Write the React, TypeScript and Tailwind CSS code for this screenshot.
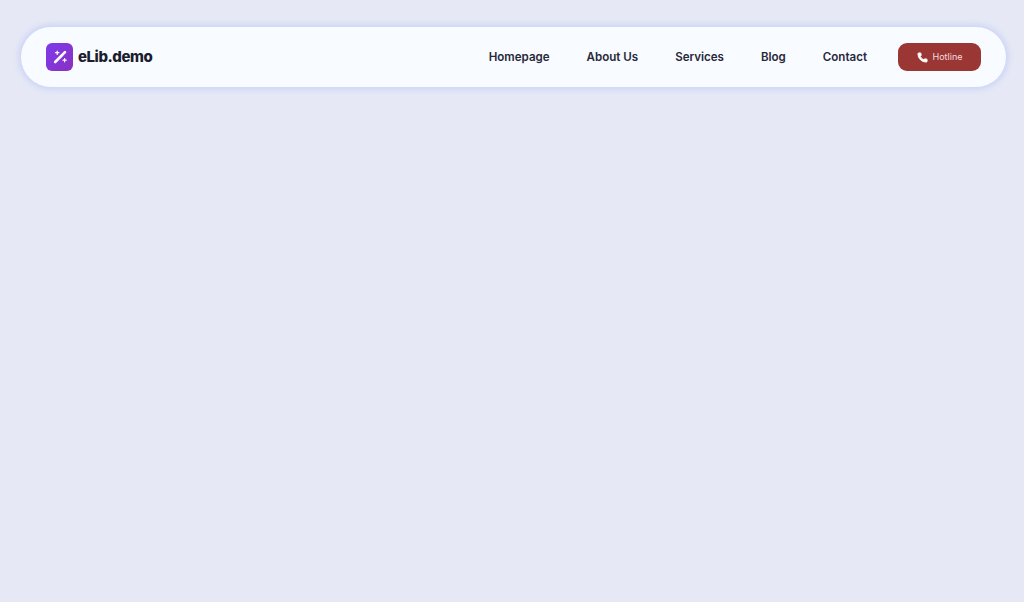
import { Phone } from "lucide-react";

const links = ["Homepage", "About Us", "Services", "Blog", "Contact"];

export default function App() {
  return (
    <div className="min-h-[602px] bg-[#e6e9f5] pl-[21px] pr-[18px] pt-[27px] font-['Inter',sans-serif]">
      <header className="flex h-[60px] items-center justify-between rounded-[30px] bg-[#f8fbff] px-[25px] shadow-[0_0_7px_2px_#c9d0f6]">
        <div className="flex items-center gap-[5px]">
          <div className="flex h-7 w-[27px] items-center justify-center rounded-[6px] bg-gradient-to-br from-[#7c3aed] to-[#8b2fc0]">
            <svg width="16" height="16" viewBox="0 0 16 16" fill="none" stroke="#ffffff" strokeLinecap="round">
              <path d="M3.2 13 L10.2 6" strokeWidth="2.6" />
              <path d="M11 5.2 L13 3.2" strokeWidth="2.6" />
              <path d="M5.2 2v3.4M3.5 3.7h3.4" strokeWidth="1.2" />
              <path d="M12.6 9.6v3.2M11 11.2h3.2" strokeWidth="1.2" />
            </svg>
          </div>
          <span className="pt-[1px] text-[15px] font-extrabold tracking-[-0.45px] text-[#1c1d2e]">eLib.demo</span>
        </div>
        <nav className="flex items-center">
          <div className="flex items-center gap-[37px] pt-[2px]">
            {links.map((l) => (
              <a key={l} className="text-[11.55px] font-semibold text-[#27283a]">{l}</a>
            ))}
          </div>
          <button className="ml-[31px] flex h-7 w-[83px] items-center justify-center gap-[5px] rounded-[9px] bg-[#9a3634] text-[9px] text-[#f3dede]">
            <Phone size={11} color="#ffffff" fill="#ffffff" />
            Hotline
          </button>
        </nav>
      </header>
    </div>
  );
}
